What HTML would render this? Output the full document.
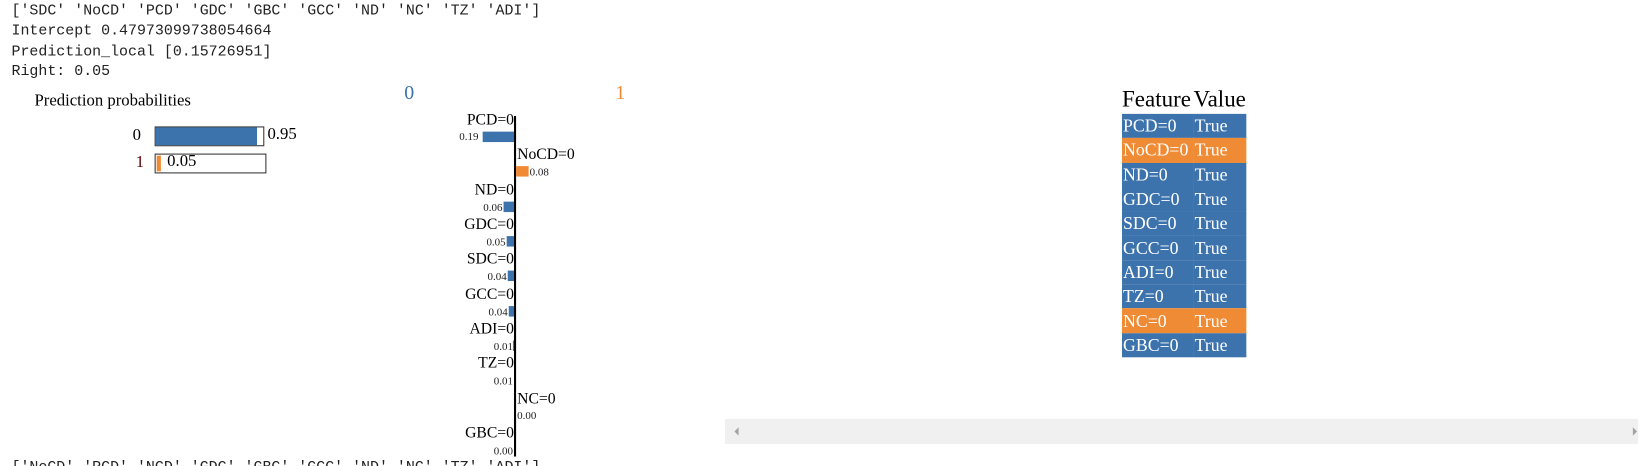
<!DOCTYPE html>
<html><head><meta charset="utf-8"><style>
html,body{margin:0;width:1638px;height:466px;overflow:hidden;background:#fff}
body{position:relative;font-family:"Liberation Serif",serif}
#clip{position:absolute;left:0;top:0;width:1638px;height:466px;overflow:hidden}
#w{position:absolute;left:0;top:0;width:1568px;height:446px;transform:scale(1.0447);transform-origin:0 0}
.a{position:absolute;white-space:nowrap}
.mono{font-family:"Liberation Mono",monospace;font-size:14.3px;color:#222;left:11px}
.lab{font-size:15px;color:#000}
.num{font-size:10.5px;color:#222}
.b{position:absolute;background:#3d73ac}
.o{position:absolute;background:#ef8a35}
table{position:absolute;left:1074px;top:80px;border-collapse:collapse;border-spacing:0;font-family:"Liberation Serif",serif}
th{font-size:22px;font-weight:normal;text-align:left;padding:0;height:29px;line-height:29px}
td{font-size:17px;color:#fff;padding:0 5px 0 1px;height:23.3px;line-height:23px;border:0}
tr.bl td{background:#3d73ac}
tr.or td{background:#ef8a35}
</style></head><body><div id="clip"><div id="w">
<div class="a mono" style="top:3px">['SDC' 'NoCD' 'PCD' 'GDC' 'GBC' 'GCC' 'ND' 'NC' 'TZ' 'ADI']</div>
<div class="a mono" style="top:22px">Intercept 0.47973099738054664</div>
<div class="a mono" style="top:42px">Prediction_local [0.15726951]</div>
<div class="a mono" style="top:61px">Right: 0.05</div>
<div class="a mono" style="top:440px">['NoCD' 'PCD' 'NCD' 'GDC' 'GBC' 'GCC' 'ND' 'NC' 'TZ' 'ADI']</div>

<div class="a" style="left:33px;top:88px;font-size:16px">Prediction probabilities</div>
<div class="a" style="left:127px;top:121px;font-size:16px">0</div>
<div class="a" style="left:148px;top:121px;width:103px;height:17px;border:1px solid #333"><div class="b" style="left:0;top:0;width:97px;height:17px"></div></div>
<div class="a" style="left:256px;top:120px;font-size:16px">0.95</div>
<div class="a" style="left:130px;top:147px;font-size:16px;color:#5a0000">1</div>
<div class="a" style="left:148px;top:147px;width:105px;height:17px;border:1px solid #333"><div class="o" style="left:1px;top:1px;width:4px;height:15px"></div></div>
<div class="a" style="left:160px;top:146px;font-size:16px">0.05</div>

<div class="a" style="left:387px;top:79px;font-size:19px;color:#3d73ac">0</div>
<div class="a" style="left:589px;top:79px;font-size:19px;color:#ef8a35">1</div>

<div class="a" style="left:492px;top:111px;width:2px;height:326px;background:#000"></div>

<div class="a lab" style="right:1076px;top:107px">PCD=0</div>
<div class="b" style="left:462px;top:126px;width:30px;height:10px"></div>
<div class="a num" style="right:1110px;top:126px">0.19</div>

<div class="a lab" style="left:495px;top:140px">NoCD=0</div>
<div class="o" style="left:494px;top:159px;width:12px;height:10px"></div>
<div class="a num" style="left:507px;top:160px">0.08</div>

<div class="a lab" style="right:1076px;top:174px">ND=0</div>
<div class="b" style="left:482px;top:193px;width:10px;height:10px"></div>
<div class="a num" style="right:1087px;top:194px">0.06</div>

<div class="a lab" style="right:1076px;top:207px">GDC=0</div>
<div class="b" style="left:485px;top:226px;width:7px;height:10px"></div>
<div class="a num" style="right:1084px;top:227px">0.05</div>

<div class="a lab" style="right:1076px;top:240px">SDC=0</div>
<div class="b" style="left:486px;top:259px;width:6px;height:10px"></div>
<div class="a num" style="right:1083px;top:260px">0.04</div>

<div class="a lab" style="right:1076px;top:274px">GCC=0</div>
<div class="b" style="left:487px;top:293px;width:5px;height:10px"></div>
<div class="a num" style="right:1082px;top:294px">0.04</div>

<div class="a lab" style="right:1076px;top:307px">ADI=0</div>
<div class="b" style="left:491px;top:326px;width:1px;height:10px"></div>
<div class="a num" style="right:1077px;top:327px">0.01</div>

<div class="a lab" style="right:1076px;top:340px">TZ=0</div>
<div class="a num" style="right:1077px;top:360px">0.01</div>

<div class="a lab" style="left:495px;top:374px">NC=0</div>
<div class="a num" style="left:495px;top:393px">0.00</div>

<div class="a lab" style="right:1076px;top:407px">GBC=0</div>
<div class="a num" style="right:1077px;top:427px">0.00</div>

<table>
<tr><th>Feature</th><th>Value</th></tr>
<tr class="bl"><td>PCD=0</td><td>True</td></tr>
<tr class="or"><td>NoCD=0</td><td>True</td></tr>
<tr class="bl"><td>ND=0</td><td>True</td></tr>
<tr class="bl"><td>GDC=0</td><td>True</td></tr>
<tr class="bl"><td>SDC=0</td><td>True</td></tr>
<tr class="bl"><td>GCC=0</td><td>True</td></tr>
<tr class="bl"><td>ADI=0</td><td>True</td></tr>
<tr class="bl"><td>TZ=0</td><td>True</td></tr>
<tr class="or"><td>NC=0</td><td>True</td></tr>
<tr class="bl"><td>GBC=0</td><td>True</td></tr>
</table>

<div class="a" style="left:694px;top:401px;width:874px;height:24px;background:#f0f0f0"></div>
<div class="a" style="left:703px;top:409px;width:0;height:0;border-top:4px solid transparent;border-bottom:4px solid transparent;border-right:4px solid #a3a3a3"></div>
<div class="a" style="left:1563px;top:409px;width:0;height:0;border-top:4px solid transparent;border-bottom:4px solid transparent;border-left:4px solid #a3a3a3"></div>
</div></div></body></html>
